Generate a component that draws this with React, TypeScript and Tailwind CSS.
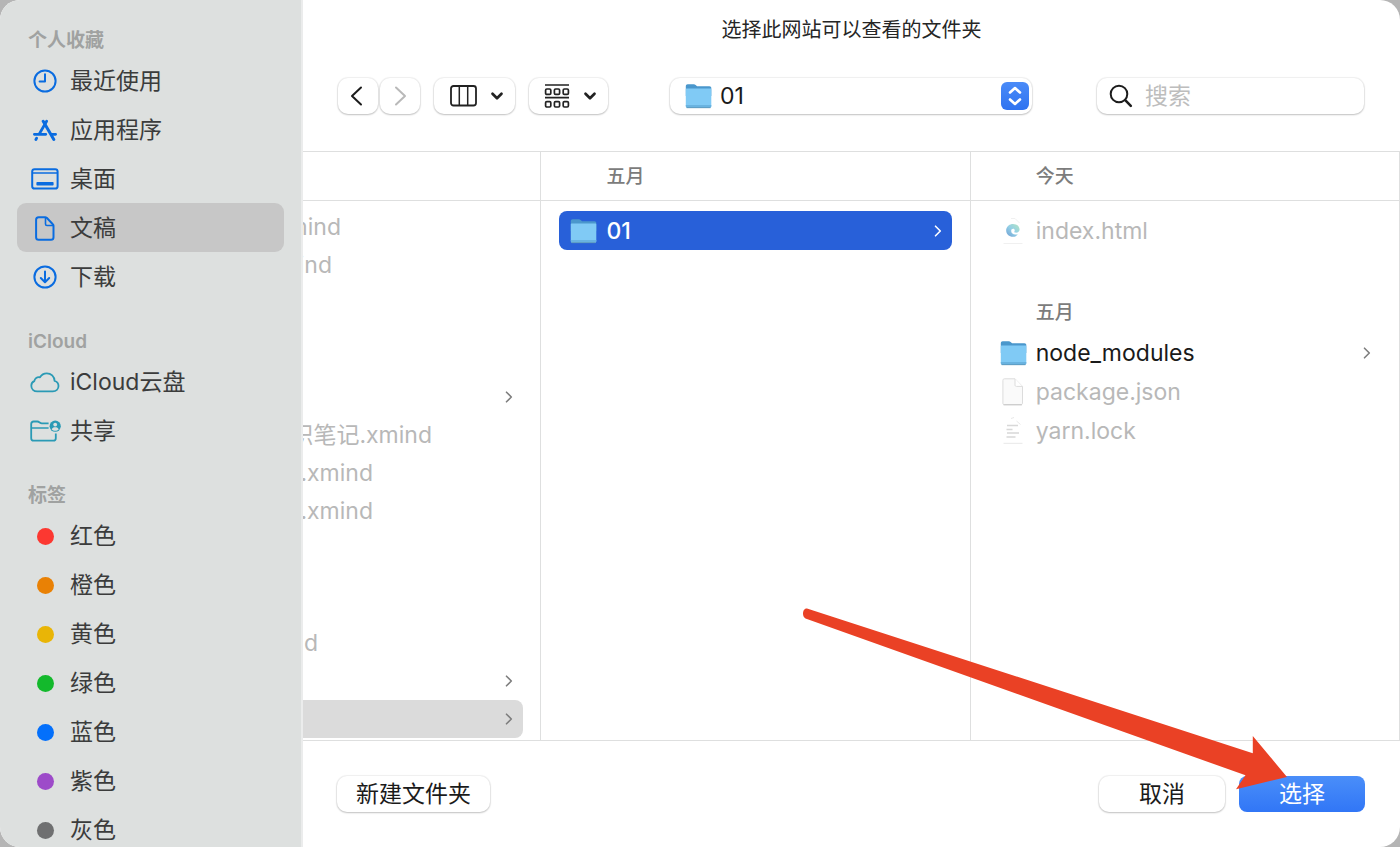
import type { ReactNode } from 'react';
import { clsx } from 'clsx';
import { ChevronDown } from 'lucide-react';

interface SidebarItem {
  name: string;
  icon: ReactNode;
  active?: boolean;
}

const tags = [
  { name: '红色', color: 'bg-[#fc3831]' },
  { name: '橙色', color: 'bg-[#e98105]' },
  { name: '黄色', color: 'bg-[#e9b506]' },
  { name: '绿色', color: 'bg-[#13b92c]' },
  { name: '蓝色', color: 'bg-[#0470fb]' },
  { name: '紫色', color: 'bg-[#9d4bc9]' },
  { name: '灰色', color: 'bg-[#6f7071]' },
];

const sidebarGroups: { title: string; items: SidebarItem[] }[] = [
  {
    title: '个人收藏',
    items: [
      { name: '最近使用', icon: <ClockIcon /> },
      { name: '应用程序', icon: <AppsIcon /> },
      { name: '桌面', icon: <DesktopIcon /> },
      { name: '文稿', icon: <DocumentIcon />, active: true },
      { name: '下载', icon: <DownloadIcon /> },
    ],
  },
  {
    title: 'iCloud',
    items: [
      { name: 'iCloud云盘', icon: <CloudIcon /> },
      { name: '共享', icon: <SharedIcon /> },
    ],
  },
  {
    title: '标签',
    items: tags.map((tag) => ({
      name: tag.name,
      icon: <span className={clsx('size-[17px] rounded-full', tag.color)} />,
    })),
  },
];

// First column is scrolled left, so only the tail of each name shows
const parentGroups = [
  [
    { name: '.xmind', width: 'w-[38px]' },
    { name: '.xmind', width: 'w-[29px]' },
  ],
  [
    { name: '', width: 'w-0', folder: true },
    { name: '识笔记.xmind', width: 'w-[129px]' },
    { name: '.xmind', width: 'w-[70px]' },
    { name: '.xmind', width: 'w-[70px]' },
  ],
  [
    { name: '.xmind', width: 'w-[15px]' },
    { name: '', width: 'w-0', folder: true },
    { name: '', width: 'w-0', folder: true, active: true },
  ],
];

function ClockIcon() {
  return (
    <svg width="24" height="24" viewBox="0 0 24 24" fill="none" stroke="#0a6ce0" strokeWidth="2" strokeLinecap="round" strokeLinejoin="round">
      <circle cx="12" cy="12" r="10.6" />
      <path d="M12 5.200V12.400H6.600" />
    </svg>
  );
}

function AppsIcon() {
  return (
    <svg width="24" height="22" viewBox="0 0 24 22" fill="none" stroke="#0a6ce0" strokeLinecap="round">
      <path d="M13.6 2.2 6.6 14.4M3.6 19.2l-.7 1.3" strokeWidth="2.8" />
      <path d="M10.2 2.2 20.8 20.4" strokeWidth="3" />
      <path d="M1.4 15.3h11.4M18.6 15.3h4" strokeWidth="2.8" />
    </svg>
  );
}

function DesktopIcon() {
  return (
    <svg width="28" height="22" viewBox="0 0 28 22" fill="none" stroke="#0a6ce0" strokeWidth="2">
      <rect x="1.200" y="1.200" width="25.400" height="19.400" rx="2.400" />
      <path d="M1.400 5h25" strokeWidth="1.400" />
      <rect x="5.400" y="14" width="17.200" height="3.600" rx=".8" fill="#0a6ce0" stroke="none" />
    </svg>
  );
}

function DocumentIcon() {
  return (
    <svg width="20" height="25" viewBox="0 0 20 25" fill="none" stroke="#0a6ce0" strokeWidth="2" strokeLinejoin="round">
      <path d="M3.6 1.2h6.6c.6 0 1 .2 1.500.6l6.100 6.400c.5.5.7 1 .7 1.600v11.400c0 1.500-.9 2.500-2.500 2.500H3.600c-1.600 0-2.500-1-2.500-2.500V3.700c0-1.500.9-2.500 2.500-2.500Z" />
      <path d="M10.500 1.400v6.700c0 .9.5 1.400 1.400 1.400h6.300" strokeWidth="1.600" />
    </svg>
  );
}

function DownloadIcon() {
  return (
    <svg width="24" height="24" viewBox="0 0 24 24" fill="none" stroke="#0a6ce0" strokeWidth="2" strokeLinecap="round" strokeLinejoin="round">
      <circle cx="12" cy="12" r="10.600" />
      <path d="M12 6.500v10.600M7.800 13l4.200 4.200 4.200-4.200" />
    </svg>
  );
}

function CloudIcon() {
  return (
    <svg width="30" height="21" viewBox="0 0 30 21" fill="none" stroke="#2a9ab5" strokeWidth="1.800" strokeLinejoin="round">
      <path d="M7.200 19.400h15.600c3.300 0 5.700-2.300 5.700-5.300 0-2.600-1.600-4.500-3.900-5.100C24.400 4.500 21 1.300 16.800 1.300c-3 0-5.400 1.500-6.800 4-3-.7-5.300 1.100-5.700 3.900C2.500 9.900 1.300 11.600 1.300 13.700c0 3.200 2.500 5.700 5.900 5.700Z" />
    </svg>
  );
}

function SharedIcon() {
  return (
    <svg width="31" height="22" viewBox="0 0 31 22" fill="none" stroke="#2a9ab5" strokeWidth="1.800" strokeLinejoin="round">
      <path d="M25.800 13.500v4.700c0 1.600-.9 2.500-2.500 2.500H3.700c-1.600 0-2.500-.9-2.500-2.500V4c0-1.600.9-2.500 2.400-2.500h3.800c.8 0 1.300.2 1.900.7l.8.600c.5.400 1 .6 1.700.6h6.800" />
      <path d="M1.400 8h17.200" strokeWidth="1.500" />
      <circle cx="25.200" cy="6.200" r="5.600" fill="#2a9ab5" stroke="none" />
      <circle cx="25.200" cy="4.600" r="1.900" fill="#dde0df" stroke="none" />
      <path d="M21.700 9.600c.5-1.700 1.800-2.300 3.500-2.300s3 .6 3.500 2.300c-.9.900-2.100 1.200-3.500 1.200s-2.600-.3-3.500-1.200Z" fill="#dde0df" stroke="none" />
    </svg>
  );
}

function FolderIcon() {
  return (
    <svg width="27" height="26" viewBox="0 0 27 26">
      <path d="M.8 3.200C.8 1.900 1.500 1.200 2.700 1.200h6.100c.8 0 1.300.2 1.800.7l.9.800c.4.400.8.500 1.400.500h11.500c1.200 0 1.900.7 1.900 1.900V13H.8Z" fill="#4a97cc" />
      <path d="M.8 6.600c0-.6.400-1 1-1h23.500c.6 0 1 .4 1 1v16.500c0 1.100-.7 1.800-1.800 1.800H2.600c-1.100 0-1.800-.7-1.800-1.800Z" fill="#80caf5" />
      <path d="M.8 22h25.500v1.100c0 1.100-.7 1.800-1.800 1.800H2.600c-1.100 0-1.800-.7-1.800-1.800Z" fill="#69b3e0" />
      <path d="M1.600 24.700h23.900" stroke="#5b93b8" strokeWidth=".8" />
    </svg>
  );
}

function EdgeFileIcon() {
  return (
    <svg width="22" height="28" viewBox="0 0 22 28" fill="none">
      <defs>
        <linearGradient id="edge" x1="1" y1="0" x2="0" y2="1">
          <stop offset="0" stopColor="#b4e6c2" />
          <stop offset=".5" stopColor="#93cfe6" />
          <stop offset="1" stopColor="#6f9fd4" />
        </linearGradient>
      </defs>
      <path d="M1.500 26.500h19M9 1.500h4l4.500 4.500" stroke="#f0f0f0" />
      <path d="M4.200 12.500C5 9.200 7.600 7 11 7c3.700 0 6.600 2.500 6.600 5.600 0 2-1.600 3.200-3.500 3.200-1.500 0-2.100-.6-1.600-1.500.7-1.400-.2-2.500-1.300-2.500-1.300 0-2 .9-2 2.200 0 2.600 2.900 4.400 6.600 3.200-1 1.700-2.600 2.600-4.800 2.600-4.200 0-7.200-3.100-6.800-7.300Z" fill="url(#edge)" />
    </svg>
  );
}

function BlankFileIcon() {
  return (
    <svg width="22" height="28" viewBox="0 0 22 28" fill="none" stroke="#dcdcdc">
      <path d="M2.500.8H13l7.500 7.600v16.700c0 1-.6 1.600-1.600 1.600H2.500c-1 0-1.600-.6-1.600-1.600V2.400C.9 1.400 1.500.8 2.500.8Z" fill="#fafafa" />
      <path d="M13 .8v6.100c0 1 .5 1.500 1.500 1.500h6" fill="#fff" />
      <path d="M1.500 26.800h18.400" stroke="#c6c6c6" />
    </svg>
  );
}

function TextFileIcon() {
  return (
    <svg width="22" height="28" viewBox="0 0 22 28" fill="none" stroke="#d8d8d8">
      <path d="M9 1.500 12 .5M14.500 4l4 3.500" stroke="#e8e8e8" />
      <path d="M5 8.500h11M4.500 12.500h6M5 16h12M4.500 20h9" strokeWidth="1.400" />
      <path d="M1.500 26.300h19" stroke="#e8e8e8" />
    </svg>
  );
}

function RowChevron({ className }: { className: string }) {
  return (
    <svg width="8" height="12" viewBox="0 0 8 12" fill="none" stroke="currentColor" strokeWidth="1.600" strokeLinecap="round" strokeLinejoin="round" className={className}>
      <path d="M1.500 1.200 6.300 6 1.500 10.800" />
    </svg>
  );
}

function FileRow({ name, icon, state }: { name: string; icon: ReactNode; state?: 'selected' | 'folder' }) {
  return (
    <li className="px-[18px]">
      <button
        type="button"
        disabled={!state}
        className={clsx(
          'flex h-[39px] w-full items-center rounded-lg pr-[10px] pl-[11px] text-left',
          state === 'selected' && 'bg-[#2860d9] font-medium text-white',
          state === 'folder' && 'text-[#1a1a1a]',
          !state && 'text-[#b8b8b8]',
        )}
      >
        <span className="flex w-[27px] justify-center">{icon}</span>
        <span className="ml-[9px] flex-1">{name}</span>
        {state && <RowChevron className={state === 'selected' ? 'text-white' : 'text-[#7d7d7d]'} />}
      </button>
    </li>
  );
}

function Sidebar() {
  return (
    <nav className="w-[303px] shrink-0 overflow-hidden border-r-2 border-[#ebecec] bg-[#dde0df] pt-[26px]">
      {sidebarGroups.map((group) => (
        <section key={group.title} className="mb-[26px]">
          <h2 className="flex h-[30px] items-center pl-7 text-[19px] font-semibold text-[#a0a2a1]">{group.title}</h2>
          <ul className="pr-[17px] pl-[17px]">
            {group.items.map((item) => (
              <li key={item.name}>
                <button
                  type="button"
                  className={clsx(
                    'flex h-[49px] w-full items-center rounded-[9px] pt-px pl-3 text-left text-[#3b3c3c]',
                    item.active && 'bg-[#c7c7c7]',
                  )}
                >
                  <span className="flex w-8 justify-center">{item.icon}</span>
                  <span className="ml-[9px]">{item.name}</span>
                </button>
              </li>
            ))}
          </ul>
        </section>
      ))}
    </nav>
  );
}

const control =
  'flex h-9 items-center justify-center rounded-[10px] bg-white shadow-[0_0_1px_1px_rgba(0,0,0,0.06),0_1px_2px_rgba(0,0,0,0.2)]';

function Toolbar() {
  return (
    <div className="flex h-[73px] items-start pr-9 pl-[35px]">
      <button type="button" aria-label="后退" className={clsx(control, 'w-10 pr-1 text-[#1c1c1c]')}>
        <svg width="13" height="20" viewBox="0 0 13 20" fill="none" stroke="currentColor" strokeWidth="2" strokeLinecap="round" strokeLinejoin="round">
          <path d="M11 1.500 2 10l9 8.500" />
        </svg>
      </button>
      <button type="button" aria-label="前进" className={clsx(control, 'ml-[2px] w-10 text-[#b9b9b9]')}>
        <svg width="13" height="20" viewBox="0 0 13 20" fill="none" stroke="currentColor" strokeWidth="2" strokeLinecap="round" strokeLinejoin="round">
          <path d="m2 1.500 9 8.500-9 8.500" />
        </svg>
      </button>
      <button type="button" aria-label="分栏" className={clsx(control, 'ml-[14px] w-[81px] gap-[11px] pl-[6px]')}>
        <svg width="27" height="22" viewBox="0 0 27 22" fill="none" stroke="#222" strokeWidth="1.800">
          <rect x="1" y="1" width="25" height="19.500" rx="2.500" />
          <path d="M9.300 1v19.500M17.700 1v19.500" strokeWidth="1.500" />
        </svg>
        <ChevronDown size={18} strokeWidth={3.600} className="text-[#222]" />
      </button>
      <button type="button" aria-label="分组" className={clsx(control, 'ml-[14px] w-[79px] gap-[11px] pl-[6px]')}>
        <svg width="26" height="25" viewBox="0 0 26 25" fill="none" stroke="#222" strokeWidth="1.700">
          <path d="M1 1h24M1 13.700h24" />
          <rect x="1.600" y="5" width="5.200" height="5.400" rx="1.200" />
          <rect x="10.400" y="5" width="5.200" height="5.400" rx="1.200" />
          <rect x="19.200" y="5" width="5.200" height="5.400" rx="1.200" />
          <rect x="1.600" y="17.600" width="5.200" height="5.400" rx="1.200" />
          <rect x="10.400" y="17.600" width="5.200" height="5.400" rx="1.200" />
          <rect x="19.200" y="17.600" width="5.200" height="5.400" rx="1.200" />
        </svg>
        <ChevronDown size={18} strokeWidth={3.600} className="text-[#222]" />
      </button>

      <div className="relative ml-[62px] flex-1">
        <select aria-label="位置" className={clsx(control, 'w-full appearance-none pr-9 pl-[50px] text-[#1a1a1a]')}>
          <option>01</option>
        </select>
        <span className="pointer-events-none absolute top-[5px] left-[15px]">
          <FolderIcon />
        </span>
        <span className="pointer-events-none absolute top-1 right-[3px] flex size-7 items-center justify-center rounded-md bg-linear-to-b from-[#4a8bf8] to-[#2f73f0]">
          <svg width="14" height="20" viewBox="0 0 14 20" fill="none" stroke="#fff" strokeWidth="2.600" strokeLinecap="round" strokeLinejoin="round">
            <path d="M2 6.500 7 2l5 4.500M2 13.500 7 18l5-4.500" />
          </svg>
        </span>
      </div>

      <label className={clsx(control, 'ml-[65px] w-[267px] pl-3')}>
        <svg width="24" height="24" viewBox="0 0 24 24" fill="none" stroke="#1c1c1c" strokeLinecap="round">
          <circle cx="10" cy="10" r="8.300" strokeWidth="2" />
          <path d="m16.200 16.200 5.600 5.600" strokeWidth="2.600" />
        </svg>
        <input
          type="search"
          aria-label="搜索"
          placeholder="搜索"
          className="ml-3 w-0 flex-1 bg-transparent outline-none placeholder:text-[#bdbdbd]"
        />
      </label>
    </div>
  );
}

function ColumnHeader({ children }: { children?: ReactNode }) {
  return (
    <h3 className="flex h-[49px] items-center border-b border-[#dedfdf] pt-px pl-[65px] text-[19px] font-medium text-[#7c7c7c]">
      {children}
    </h3>
  );
}

function Columns() {
  return (
    <div className="grid min-h-0 flex-1 grid-cols-[5fr_9fr_9fr] overflow-hidden border-y border-[#dedfdf]">
      <div className="overflow-hidden border-r border-[#dedfdf]">
        <ColumnHeader />
        <div className="flex flex-col gap-[94px] pt-[7px]">
          {parentGroups.map((group, index) => (
            <ul key={index}>
              {group.map((row, i) => (
                <li key={i} className="pr-[17px]">
                  <button
                    type="button"
                    aria-label={row.folder ? '文件夹' : undefined}
                    disabled={!row.folder}
                    className={clsx(
                      'flex h-[38px] w-full items-center justify-between rounded-r-lg pr-[10px] text-[#b8b8b8]',
                      row.active && 'bg-[#dbdbdb]',
                    )}
                  >
                    <span className={clsx('flex justify-end overflow-hidden whitespace-nowrap', row.width)}>{row.name}</span>
                    {row.folder && <RowChevron className="text-[#7d7d7d]" />}
                  </button>
                </li>
              ))}
            </ul>
          ))}
        </div>
      </div>

      <div className="border-r border-[#dedfdf]">
        <ColumnHeader>五月</ColumnHeader>
        <ul className="pt-[10px]">
          <FileRow name="01" icon={<FolderIcon />} state="selected" />
        </ul>
      </div>

      <div className="border-r border-[#dedfdf]">
        <ColumnHeader>今天</ColumnHeader>
        <ul className="pt-[10px]">
          <FileRow name="index.html" icon={<EdgeFileIcon />} />
        </ul>
        <h3 className="mt-[43px] flex h-10 items-center pl-[65px] text-[19px] font-medium text-[#7c7c7c]">五月</h3>
        <ul>
          <FileRow name="node_modules" icon={<FolderIcon />} state="folder" />
          <FileRow name="package.json" icon={<BlankFileIcon />} />
          <FileRow name="yarn.lock" icon={<TextFileIcon />} />
        </ul>
      </div>
    </div>
  );
}

export default function App() {
  return (
    <div className="h-screen bg-[#b5b5b5] font-['Inter','Noto_Sans_CJK_SC',sans-serif] text-[23px] leading-8">
      <div className="relative flex h-full overflow-hidden rounded-[20px] bg-white">
        <Sidebar />
        <main className="flex min-w-0 flex-1 flex-col">
          <h1 className="flex h-[78px] justify-center pt-[14px] text-[20px] text-[#262626]">
            选择此网站可以查看的文件夹
          </h1>
          <Toolbar />
          <Columns />
          <footer className="flex h-[106px] items-start pt-[35px] pr-[35px] pl-[34px]">
            <button type="button" className={clsx(control, 'w-[153px] text-[#1a1a1a]')}>
              新建文件夹
            </button>
            <button type="button" className={clsx(control, 'ml-auto w-[126px] text-[#1a1a1a]')}>
              取消
            </button>
            <button
              type="button"
              className="ml-[14px] flex h-9 w-[126px] items-center justify-center rounded-lg bg-linear-to-b from-[#4a8ef9] to-[#3176f6] text-white"
            >
              选择
            </button>
          </footer>
        </main>

        {/* Pointer to the confirm button */}
        <svg width="490" height="186" viewBox="0 0 490 186" fill="#ea4125" className="pointer-events-none absolute right-[110px] bottom-[55px]">
          <path d="M7 2.500 452.800 147.200V130L487 171l-51 12.300 9.500-14L5.500 12.500C1.500 10.500 2.500 2 7 2.500Z" />
        </svg>
      </div>
    </div>
  );
}
